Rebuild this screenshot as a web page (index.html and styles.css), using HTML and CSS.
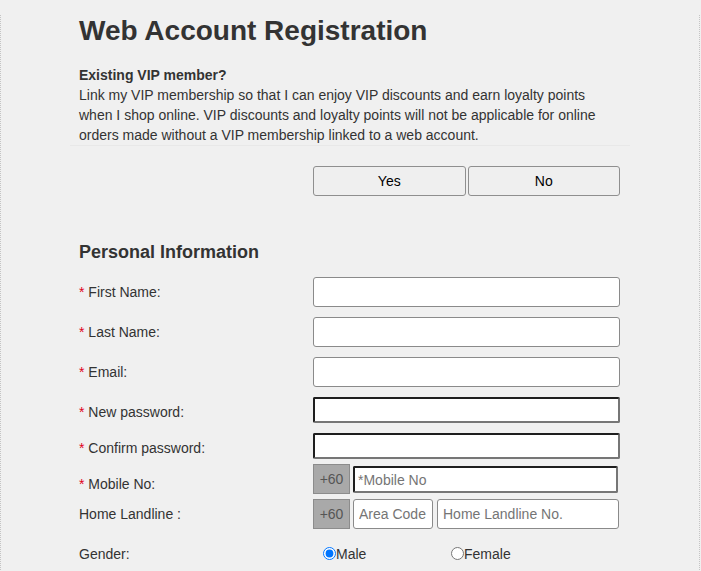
FILE: index.html
```html
<!DOCTYPE html>
<html lang="en">
<head>
<meta charset="utf-8">
<title>Web Account Registration</title>
<link rel="stylesheet" href="styles.css">
</head>
<body>
<div class="page">
  <div class="content">
    <h1 class="title">Web Account Registration</h1>
    <div class="vip">
      <div class="vip-q">Existing VIP member?</div>
      <p class="vip-text">Link my VIP membership so that I can enjoy VIP discounts and earn loyalty points when I shop online. VIP discounts and loyalty points will not be applicable for online orders made without a VIP membership linked to a web account.</p>
    </div>
    <div class="choice">
      <button class="btn" type="button">Yes</button>
      <button class="btn" type="button">No</button>
    </div>

    <h2 class="section">Personal Information</h2>

    <div class="row r1">
      <label class="lbl"><span class="req">*</span> First Name:</label>
      <div class="ctl"><input class="inp full" type="text"></div>
    </div>
    <div class="row r2">
      <label class="lbl"><span class="req">*</span> Last Name:</label>
      <div class="ctl"><input class="inp full" type="text"></div>
    </div>
    <div class="row r3">
      <label class="lbl"><span class="req">*</span> Email:</label>
      <div class="ctl"><input class="inp full" type="text"></div>
    </div>
    <div class="row r4">
      <label class="lbl"><span class="req">*</span> New password:</label>
      <div class="ctl"><input class="inset pw" type="password"></div>
    </div>
    <div class="row r5">
      <label class="lbl"><span class="req">*</span> Confirm password:</label>
      <div class="ctl"><input class="inset pw" type="password"></div>
    </div>
    <div class="row r6">
      <label class="lbl lbl-low"><span class="req">*</span> Mobile No:</label>
      <div class="ctl">
        <span class="prefix">+60</span>
        <input class="inset mobile" type="text" placeholder="*Mobile No">
      </div>
    </div>
    <div class="row r7">
      <label class="lbl">Home Landline :</label>
      <div class="ctl">
        <span class="prefix">+60</span>
        <input class="inp area" type="text" placeholder="Area Code">
        <input class="inp land" type="text" placeholder="Home Landline No.">
      </div>
    </div>
    <div class="row r8">
      <label class="lbl">Gender:</label>
      <div class="ctl radios">
        <label class="opt"><input class="radio" type="radio" name="g" checked>Male</label>
        <label class="opt"><input class="radio" type="radio" name="g">Female</label>
      </div>
    </div>
  </div>
</div>
</body>
</html>
```

FILE: styles.css
```css
html, body {
  margin: 0;
  padding: 0;
  background: #f0f0f0;
}

body {
  font-family: "Liberation Sans", Arial, sans-serif;
  color: #333;
}

.page {
  width: 700px;
  min-height: 571px;
  box-sizing: border-box;
  border-left: 1px dotted #c4c4c4;
  border-right: 1px dotted #c4c4c4;
  padding-left: 78px;
}

.content {
  width: 541px;
}

.title {
  margin: 15px 0 0;
  font-size: 28px;
  line-height: 32px;
  font-weight: bold;
  color: #333;
}

.vip {
  margin: 18px -10px 0 -9px;
  padding: 0 10px 0 9px;
  border-bottom: 1px solid #e8e8e8;
  font-size: 14px;
  line-height: 20px;
}

.vip-q {
  font-weight: bold;
}

.vip-text {
  margin: 0;
}

.choice {
  margin: 20px 0 0 234px;
  display: flex;
  gap: 2px;
}

.btn {
  flex: 1;
  height: 30px;
  box-sizing: border-box;
  background: #efefef;
  border: 1px solid #8f8f8f;
  border-radius: 3px;
  font-family: "Liberation Sans", Arial, sans-serif;
  font-size: 14px;
  color: #000;
  padding: 0;
}

.section {
  margin: 45px 0 0;
  font-size: 18px;
  line-height: 22px;
  font-weight: bold;
  color: #333;
}

.row {
  display: flex;
  align-items: center;
  height: 30px;
}

.r1 { margin-top: 14px; }
.r2, .r3, .r4 { margin-top: 10px; }
.r5 { margin-top: 6px; }
.r6 { margin-top: 1px; }
.r7 { margin-top: 5px; }
.r8 { margin-top: 10px; }

.lbl {
  width: 234px;
  flex: none;
  font-size: 14px;
  line-height: 16px;
  color: #333;
}

.lbl-low {
  padding-top: 10px;
}

.req {
  color: #e0001a;
}

.ctl {
  width: 307px;
  height: 30px;
  display: flex;
  align-items: flex-start;
}

input {
  font-family: "Liberation Sans", Arial, sans-serif;
  font-size: 14px;
  color: #333;
  margin: 0;
  outline: none;
}

input::placeholder {
  color: #757575;
}

.inp {
  height: 30px;
  box-sizing: border-box;
  background: #fff;
  border: 1px solid #8a8a8a;
  border-radius: 3px;
  padding: 0 5px;
}

.full {
  width: 307px;
}

.inset {
  box-sizing: border-box;
  background: #fff;
  border-width: 2px;
  border-style: solid;
  border-color: #1e1e1e #767676 #767676 #1e1e1e;
  border-radius: 2px;
  padding: 0 3px;
}

.pw {
  width: 307px;
  height: 26px;
}

.prefix {
  flex: none;
  width: 37px;
  height: 30px;
  box-sizing: border-box;
  background: #a9a9a9;
  border: 1px solid #8c8c8c;
  color: #555;
  font-size: 14px;
  display: flex;
  align-items: center;
  justify-content: center;
}

.mobile {
  margin: 2px 0 0 3px;
  width: 265px;
  height: 27px;
}

.area {
  margin-left: 3px;
  width: 80px;
}

.land {
  margin-left: 4px;
  width: 182px;
}

.radios {
  align-items: center;
  padding-left: 10px;
  box-sizing: border-box;
}

.opt {
  width: 128px;
  display: flex;
  align-items: center;
  font-size: 14px;
  color: #333;
}

.radio {
  width: 13px;
  height: 13px;
  margin: 0 0 2px 0;
}
```
